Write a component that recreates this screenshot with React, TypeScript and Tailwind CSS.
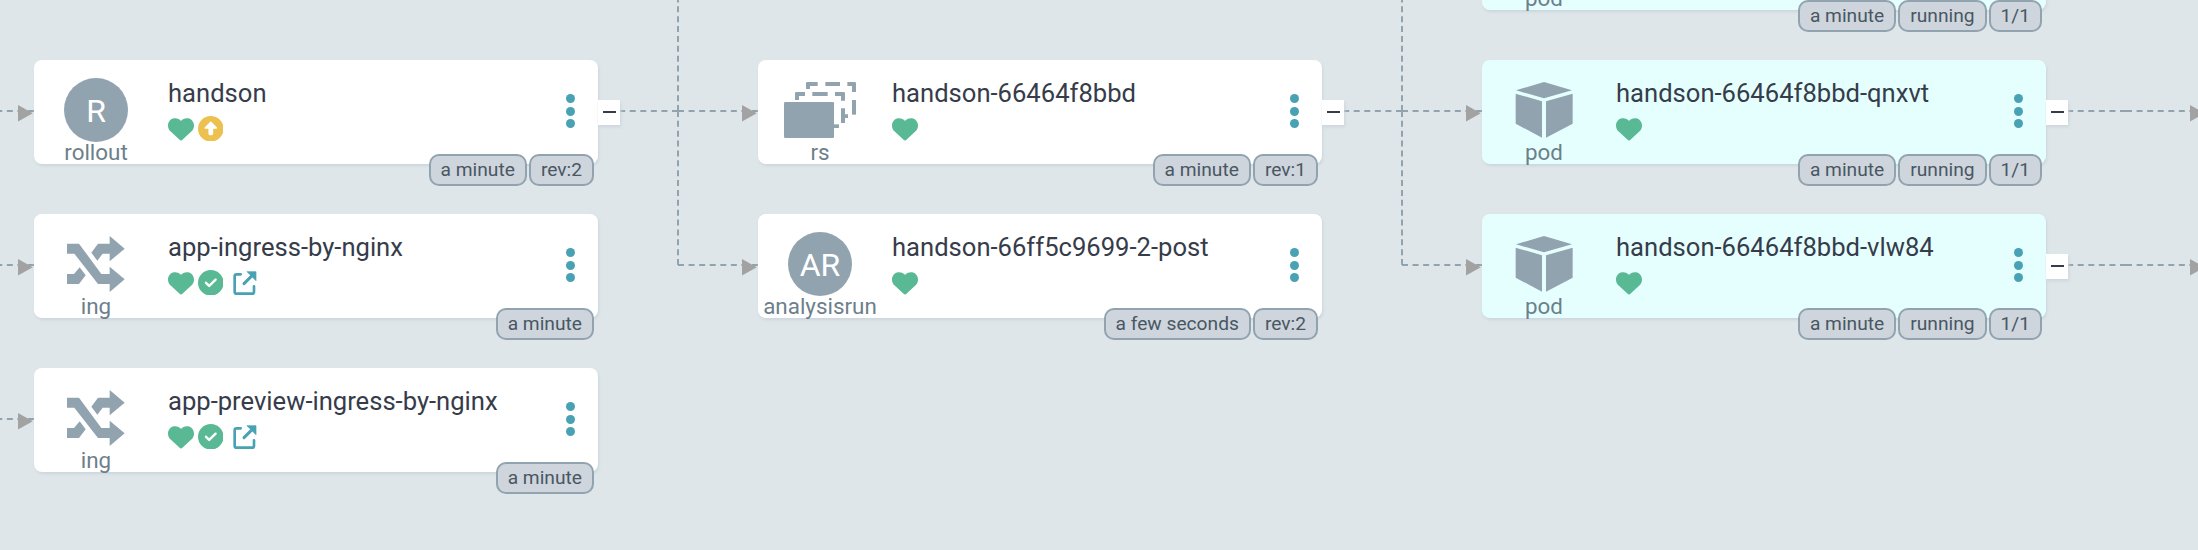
import React from 'react';
import { FaHeart, FaCircleCheck, FaCircleUp } from 'react-icons/fa6';

type Kind = 'rollout' | 'ing' | 'rs' | 'analysisrun' | 'pod';

interface NodeData {
  kind: Kind;
  name?: string;
  x: number;
  y: number;
  tags: string[];
  synced?: boolean;
  outdated?: boolean;
  expandable?: boolean;
}

const nodes: NodeData[] = [
  { kind: 'rollout', name: 'handson', x: 34, y: 60, tags: ['a minute', 'rev:2'], outdated: true, expandable: true },
  { kind: 'ing', name: 'app-ingress-by-nginx', x: 34, y: 214, tags: ['a minute'], synced: true },
  { kind: 'ing', name: 'app-preview-ingress-by-nginx', x: 34, y: 368, tags: ['a minute'], synced: true },
  { kind: 'rs', name: 'handson-66464f8bbd', x: 758, y: 60, tags: ['a minute', 'rev:1'], expandable: true },
  { kind: 'analysisrun', name: 'handson-66ff5c9699-2-post', x: 758, y: 214, tags: ['a few seconds', 'rev:2'] },
  { kind: 'pod', x: 1482, y: -94, tags: ['a minute', 'running', '1/1'] },
  { kind: 'pod', name: 'handson-66464f8bbd-qnxvt', x: 1482, y: 60, tags: ['a minute', 'running', '1/1'], expandable: true },
  { kind: 'pod', name: 'handson-66464f8bbd-vlw84', x: 1482, y: 214, tags: ['a minute', 'running', '1/1'], expandable: true },
];

const horizontalEdges = [
  { x: -46, y: 110 },
  { x: -46, y: 264 },
  { x: -46, y: 418 },
  { x: 598, y: 110 },
  { x: 678, y: 110 },
  { x: 678, y: 264 },
  { x: 1322, y: 110 },
  { x: 1402, y: 110 },
  { x: 1402, y: 264 },
  { x: 2046, y: 110 },
  { x: 2126, y: 110 },
  { x: 2046, y: 264 },
  { x: 2126, y: 264 },
];

const verticalEdges = [
  { x: 677, y: -43 },
  { x: 677, y: 111 },
  { x: 1401, y: -43 },
  { x: 1401, y: 111 },
];

const arrows = [
  { x: 18, y: 105 },
  { x: 18, y: 259 },
  { x: 18, y: 413 },
  { x: 742, y: 105 },
  { x: 742, y: 259 },
  { x: 1466, y: 105 },
  { x: 1466, y: 259 },
  { x: 2190, y: 105 },
  { x: 2190, y: 259 },
];

function KindIcon({ kind }: { kind: Kind }) {
  if (kind === 'rollout' || kind === 'analysisrun') {
    return (
      <div className="flex size-16 shrink-0 items-center justify-center rounded-full bg-[#92a3b0] pt-0.5 text-[32px] leading-none text-white">
        {kind === 'rollout' ? 'R' : 'AR'}
      </div>
    );
  }
  if (kind === 'ing') {
    return (
      <svg className="size-16 shrink-0" viewBox="192 96 192 192" fill="#92a3b0">
        <path d="M201 131H237L304 222H329V200L374 238L329 276V252H294L223 161H201Z" />
        <path d="M274 158L294 131H329V108L374 146L329 184V161H308L292 182Z" />
        <path d="M201 222H222L239 202L257 226L237 252H201Z" />
      </svg>
    );
  }
  if (kind === 'rs') {
    return (
      <svg className="h-16 w-[72px] shrink-0" viewBox="372 114 216 192" fill="#92a3b0">
        <rect x="372" y="186" width="150" height="108" rx="4" />
        <path d="M409 156H435V168H417V180H405V160Q405 156 409 156Z" />
        <path d="M457 156H503V168H457Z" />
        <path d="M525 156H551Q555 156 555 160V182H543V168H525Z" />
        <path d="M543 205H555V223H564V234H555V249H543Z" />
        <path d="M522 253H537V264H522Z" />
        <path d="M442 126H473V138H450V147H438V130Q438 126 442 126Z" />
        <path d="M496 126H540V138H496Z" />
        <path d="M562 126H584Q588 126 588 130V156H576V138H562Z" />
        <path d="M576 180H588V224H576Z" />
      </svg>
    );
  }
  return (
    <svg className="size-16 shrink-0" viewBox="396 234 192 192" fill="#92a3b0">
      <path d="M492 246L576 271L492 295L408 271Z" />
      <path d="M407 281L486 304V413L407 371Z" />
      <path d="M498 304L578 281V371L498 413Z" />
    </svg>
  );
}

function ExternalLinkIcon() {
  return (
    <svg className="ml-[9.5px] size-6" viewBox="0 0 72 72" fill="none" stroke="#49a2b4">
      <path d="M23 10H11Q5 10 5 16V62Q5 68 11 68H57Q63 68 63 62V46" strokeWidth="8" strokeLinecap="round" />
      <path d="M33 38L58 13" strokeWidth="9" strokeLinecap="round" />
      <path d="M42 2H69V29Z" fill="#49a2b4" strokeWidth="2" strokeLinejoin="round" />
    </svg>
  );
}

function ResourceNode({ node }: { node: NodeData }) {
  const background = node.kind === 'pod' ? 'bg-[#e5ffff]' : 'bg-white';
  return (
    <div
      className={`absolute flex h-[104px] w-[564px] rounded-lg shadow-[1px_2px_3px_#ccd6dd] ${background}`}
      style={{ left: node.x, top: node.y }}
    >
      <div className="flex w-[124px] shrink-0 flex-col items-center pt-[18px]">
        <KindIcon kind={node.kind} />
        <div className="-mt-[3px] text-[22.4px] leading-[26px] whitespace-nowrap text-[#6d7f8b]">{node.kind}</div>
      </div>
      {node.name && (
        <div className="flex flex-col pt-[18px] pl-[10px]">
          <div className="h-[30px] text-[25.6px] leading-[30px] whitespace-nowrap text-[#363c4a]">{node.name}</div>
          <div className="mt-[7.5px] flex h-[26px] items-center">
            <FaHeart className="size-[26px] text-[#5ab995]" />
            {node.outdated && <FaCircleUp className="ml-[3.5px] size-[25.6px] text-[#ecc150]" />}
            {node.synced && <FaCircleCheck className="ml-[3.5px] size-[25.6px] text-[#5ab995]" />}
            {node.synced && <ExternalLinkIcon />}
          </div>
        </div>
      )}
      <div className="mr-[23px] ml-auto flex w-[9px] flex-col justify-center gap-[3.5px] pb-0.5">
        <span className="size-[9px] rounded-full bg-[#49a2b4]" />
        <span className="size-[9px] rounded-full bg-[#49a2b4]" />
        <span className="size-[9px] rounded-full bg-[#49a2b4]" />
      </div>
      {node.expandable && (
        <div className="absolute top-10 left-full flex h-[25px] w-[22px] justify-center bg-white pt-[11px] shadow-[1px_2px_3px_#ccd6dd]">
          <span className="h-0.5 w-[13px] bg-[#363c4a]" />
        </div>
      )}
      <div className="absolute right-1 -bottom-[22px] flex gap-0.5">
        {node.tags.map((tag) => (
          <span
            key={tag}
            className="h-8 rounded-[10px] border-2 border-[#92a3b0] bg-[#ced5dc] px-2.5 text-[19.2px] leading-[27px] whitespace-nowrap text-[#495763]"
          >
            {tag}
          </span>
        ))}
      </div>
    </div>
  );
}

export default function App() {
  return (
    <main className="relative h-[550px] w-[2198px] overflow-hidden bg-[#dee6e9] font-['Roboto',sans-serif]">
      {verticalEdges.map((e) => (
        <div
          key={`v${e.x}-${e.y}`}
          className="absolute h-[154px] border-l-2 border-dashed border-[#92a3b0]"
          style={{ left: e.x, top: e.y }}
        />
      ))}
      {horizontalEdges.map((e) => (
        <div
          key={`h${e.x}-${e.y}`}
          className="absolute w-20 border-t-2 border-dashed border-[#92a3b0]"
          style={{ left: e.x, top: e.y }}
        />
      ))}
      {arrows.map((a) => (
        <svg
          key={`a${a.x}-${a.y}`}
          className="absolute h-[17px] w-[15px]"
          style={{ left: a.x, top: a.y }}
          viewBox="0 0 15 17"
          fill="#a2a2a2"
        >
          <path d="M0 0L14.8 8.2L0 16.4Z" />
        </svg>
      ))}
      {nodes.map((node) => (
        <ResourceNode key={`${node.x}-${node.y}`} node={node} />
      ))}
    </main>
  );
}
